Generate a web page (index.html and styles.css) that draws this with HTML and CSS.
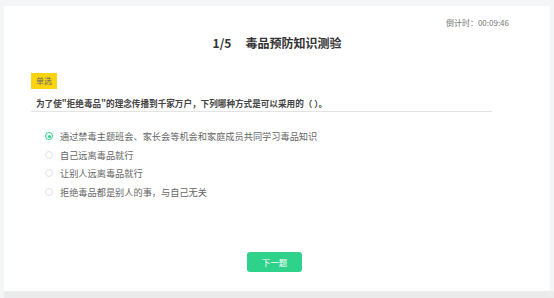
FILE: index.html
```html
<!DOCTYPE html>
<html lang="zh-CN">
<head>
<meta charset="utf-8">
<link rel="stylesheet" href="styles.css">
</head>
<body>
<div class="page">
  <div class="card">
    <div class="timer">倒计时：00:09:46</div>
    <h1 class="title"><span class="num">1/5</span>毒品预防知识测验</h1>
    <div class="quiz">
      <div class="tag">单选</div>
      <div class="question">为了使"拒绝毒品"的理念传播到千家万户，下列哪种方式是可以采用的（ ）。</div>
      <ul class="options">
        <li class="option selected"><span class="radio"></span>通过禁毒主题班会、家长会等机会和家庭成员共同学习毒品知识</li>
        <li class="option"><span class="radio"></span>自己远离毒品就行</li>
        <li class="option"><span class="radio"></span>让别人远离毒品就行</li>
        <li class="option"><span class="radio"></span>拒绝毒品都是别人的事，与自己无关</li>
      </ul>
    </div>
    <div class="actions"><button class="next">下一题</button></div>
  </div>
  <div class="hbar"></div>
</div>
</body>
</html>
```

FILE: styles.css
```css
html, body {
  margin: 0;
  padding: 0;
}
body {
  background: #f4f5f7;
  font-family: "Noto Sans CJK SC", "Noto Sans", sans-serif;
  height: 298px;
  overflow: hidden;
}
.page {
  padding: 6px 0 0 4px;
}
.card {
  background: #ffffff;
  width: 546px;
  height: 285px;
  box-sizing: border-box;
  padding: 12px 41px 0 27px;
}
.timer {
  text-align: right;
  font-size: 8px;
  line-height: 10px;
  color: #777;
}
.title {
  margin: 7px 0 0 0;
  font-size: 12px;
  line-height: 16px;
  font-weight: bold;
  color: #333;
  text-align: center;
  padding-left: 14px;
}
.title .num {
  margin-right: 14px;
}
.quiz {
  width: 461px;
  margin-top: 22px;
}
.tag {
  width: 26px;
  height: 16px;
  line-height: 16px;
  text-align: center;
  font-size: 8px;
  background: #fad50f;
  color: #666;
}
.question {
  margin-top: 8px;
  padding: 0 0 2px 5px;
  font-size: 8.6px;
  line-height: 12px;
  font-weight: bold;
  color: #444;
  border-bottom: 1px solid #e3e3e3;
}
.options {
  list-style: none;
  margin: 15px 0 0 0;
  padding: 0 0 0 14px;
}
.option {
  display: flex;
  align-items: center;
  gap: 7px;
  height: 18.5px;
  font-size: 9.2px;
  color: #666;
}
.radio {
  width: 8px;
  height: 8px;
  border: 1px solid #e2e2e2;
  border-radius: 50%;
  box-sizing: border-box;
  flex: none;
  display: flex;
  align-items: center;
  justify-content: center;
}
.selected .radio {
  border-color: #2ecf8a;
}
.selected .radio::after {
  content: "";
  width: 3px;
  height: 3px;
  border-radius: 50%;
  background: #2ecf8a;
}
.actions {
  display: flex;
  justify-content: center;
  margin-top: 51px;
  padding-left: 9px;
}
.next {
  width: 55px;
  height: 20px;
  border: none;
  border-radius: 3px;
  background: #2ed28b;
  color: #fff;
  font-family: inherit;
  font-size: 8.5px;
  padding: 0;
}
.hbar {
  width: 550px;
  height: 7px;
  background: #ebebeb;
}
```
